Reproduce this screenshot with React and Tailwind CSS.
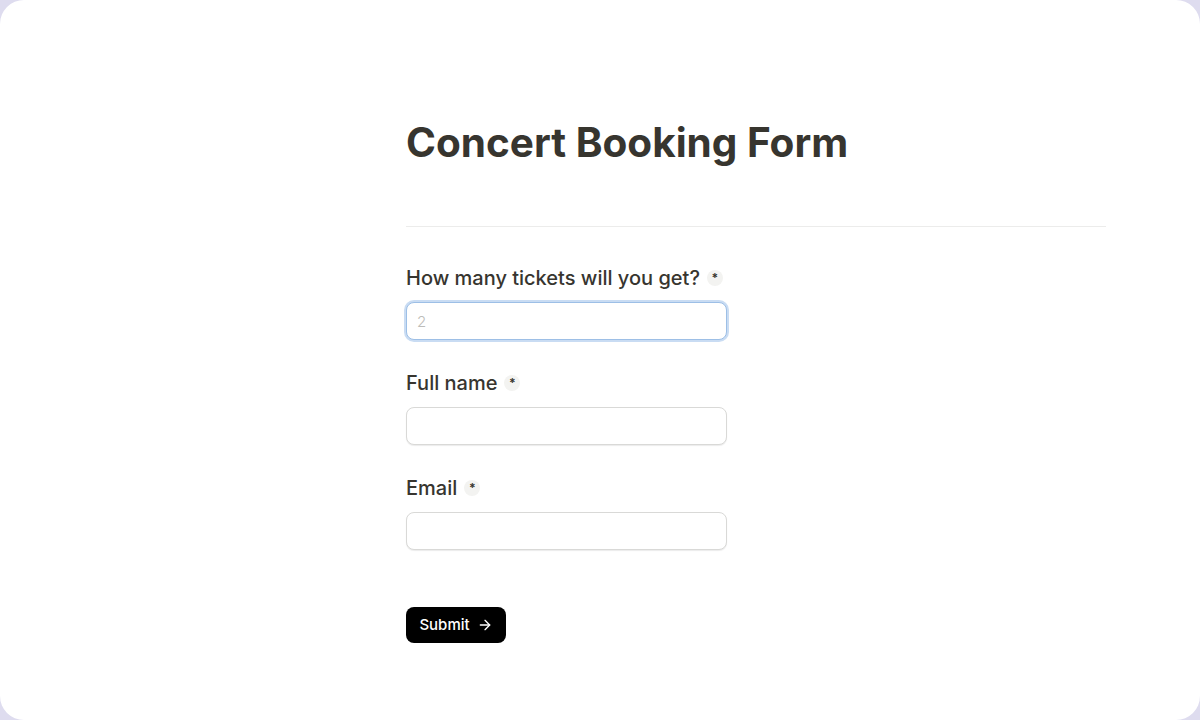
import { ArrowRight } from "lucide-react";

function Required() {
  return (
    <span className="ml-[7px] inline-flex h-[16px] w-[16px] items-center justify-center rounded-full bg-[#f3f3f1] text-[12px] font-bold leading-none text-[#37352f]">
      *
    </span>
  );
}

function Field({ label, placeholder, focused }) {
  return (
    <div className="flex flex-col">
      <label className="flex h-[24px] items-center text-[20px] font-medium text-[#37352f]">
        {label}
        <Required />
      </label>
      <input
        type="text"
        placeholder={placeholder}
        className={
          focused
            ? "mt-[12px] h-[38px] w-[321px] rounded-[8px] border border-[#9dbfe6] bg-white px-[10px] text-[15px] font-light text-[#37352f] shadow-[0_0_0_2px_#c9dcf3] outline-none placeholder:text-[#bdbcb9]"
            : "mt-[12px] h-[38px] w-[321px] rounded-[8px] border border-[#d9d9d7] bg-white px-[10px] text-[15px] text-[#37352f] shadow-[0_1px_1px_rgba(0,0,0,0.08)] outline-none placeholder:text-[#bdbcb9]"
        }
      />
    </div>
  );
}

export default function App() {
  return (
    <div className="h-[720px] w-[1200px] bg-[#dedcef] font-['Inter',sans-serif]">
      <div className="h-full w-full rounded-[24px] bg-white">
        <div className="ml-[406px] flex w-[700px] flex-col pt-[119px]">
          <h1 className="text-[40.5px] font-bold leading-[48px] text-[#37352f]">
            Concert Booking Form
          </h1>
          <div className="mt-[59px] h-px w-full bg-[#ececeb]" />
          <div className="mt-[39px] flex flex-col gap-[31px]">
            <Field label="How many tickets will you get?" placeholder="2" focused />
            <Field label="Full name" />
            <Field label="Email" />
          </div>
          <div className="mt-[57px]">
            <button className="flex h-[36px] w-[100px] items-center justify-center gap-[7px] rounded-[8px] bg-black text-[15px] font-medium text-white">
              Submit
              <ArrowRight size={16} strokeWidth={2} />
            </button>
          </div>
        </div>
      </div>
    </div>
  );
}
